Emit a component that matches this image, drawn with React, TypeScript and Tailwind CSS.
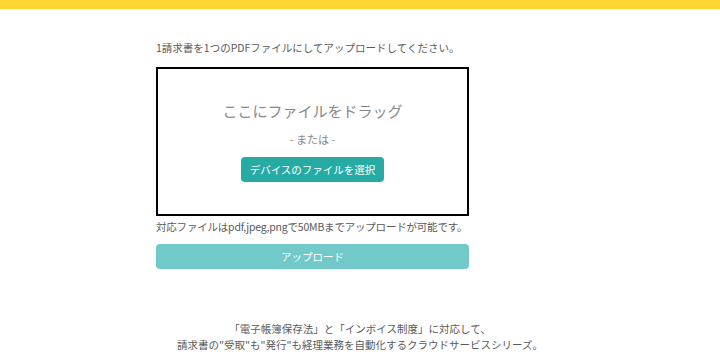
import React from "react";

export default function App() {
  const font = { fontFamily: '"Noto Sans CJK JP", "Noto Sans", sans-serif' };
  return (
    <div className="w-[720px] h-[360px] bg-white overflow-hidden" style={font}>
      <div className="h-[9px] bg-[#ffd633]" />
      <div className="ml-[156px] w-[313px] pt-[30px]">
        <p className="text-[10.5px] leading-[18px] text-[#5a5a5a] whitespace-nowrap">
          1請求書を1つのPDFファイルにしてアップロードしてください。
        </p>
        <div className="mt-[10px] h-[149px] border-2 border-black flex flex-col items-center pt-[31px]">
          <p className="text-[15px] leading-[22px] text-[#888]">ここにファイルをドラッグ</p>
          <p className="mt-[9px] text-[11px] leading-[16px] text-[#888]">- または -</p>
          <button className="mt-[10px] h-[25px] px-[9px] rounded-[4px] bg-[#26aba4] text-white text-[10.5px] leading-[25px]">
            デバイスのファイルを選択
          </button>
        </div>
        <p className="mt-[2px] text-[10.5px] leading-[18px] text-[#5a5a5a] whitespace-nowrap tracking-[-0.2px]">
          対応ファイルはpdf,jpeg,pngで50MBまでアップロードが可能です。
        </p>
        <button className="mt-[8px] w-full h-[25px] rounded-[4px] bg-[#71c9c9] text-white text-[10.5px] leading-[25px]">
          アップロード
        </button>
      </div>
      <div className="mt-[52px] text-center text-[10.5px] leading-[16px] text-[#5a5a5a] whitespace-nowrap">
        <p>「電子帳簿保存法」と「インボイス制度」に対応して、</p>
        <p>請求書の"受取"も"発行"も経理業務を自動化するクラウドサービスシリーズ。</p>
      </div>
    </div>
  );
}
